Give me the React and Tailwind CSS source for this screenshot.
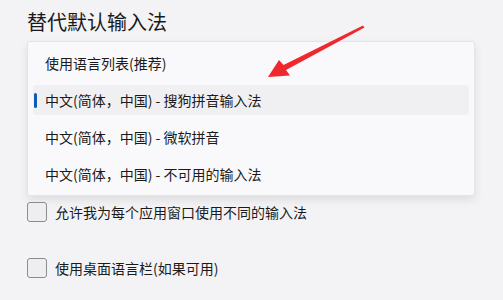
import React from 'react'

const options = [
  { label: '使用语言列表(推荐)' },
  { label: '中文(简体，中国) - 搜狗拼音输入法', selected: true },
  { label: '中文(简体，中国) - 微软拼音' },
  { label: '中文(简体，中国) - 不可用的输入法' },
]

const checks = ['允许我为每个应用窗口使用不同的输入法', '使用桌面语言栏(如果可用)']

const App = () => {
  return (
    <div
      className="relative w-[503px] h-[300px] overflow-hidden bg-[#f3f3f6] text-[#1b1b1b] pl-[27px] pt-[8px]"
      style={{ fontFamily: '"Noto Sans CJK SC", "Noto Sans", sans-serif' }}
    >
      {/* Title */}
      <h2 className="text-[20px] leading-[28px] font-normal text-[#1a1a1a]">替代默认输入法</h2>

      {/* Dropdown list */}
      <div className="mt-[5px] w-[448px] bg-[#f9f9fb] border border-[#e4e4e8] rounded-[3px] shadow-[0_4px_10px_rgba(0,0,0,0.09)] px-[5px] py-[6px] flex flex-col gap-[7px]">
        {options.map((o) => (
          <div
            key={o.label}
            className={
              'relative h-[30px] flex items-center pl-[12px] rounded-[4px] text-[14px] ' +
              (o.selected ? 'bg-[#f0f0f3]' : '')
            }
          >
            {o.selected && (
              <span className="absolute left-[1px] top-[8px] w-[3px] h-[15px] rounded-full bg-[#0f5cb8]" />
            )}
            {o.label}
          </div>
        ))}
      </div>

      {/* Checkboxes */}
      <div className="mt-[6px] flex flex-col gap-[36px]">
        {checks.map((c) => (
          <div key={c} className="flex items-center gap-[8px] h-[20px]">
            <span className="w-[20px] h-[20px] rounded-[3px] border border-[#8c8c90] bg-[#eeeef1]" />
            <span className="text-[14px] leading-[20px]">{c}</span>
          </div>
        ))}
      </div>

      {/* Red annotation arrow */}
      <svg className="absolute left-0 top-0 pointer-events-none" width="503" height="300">
        <polygon
          points="268,77 279,60 283.5,65 363,25.5 364.5,27.5 286,70 290,75.5"
          fill="#f0282d"
        />
      </svg>
    </div>
  )
}

export default App
